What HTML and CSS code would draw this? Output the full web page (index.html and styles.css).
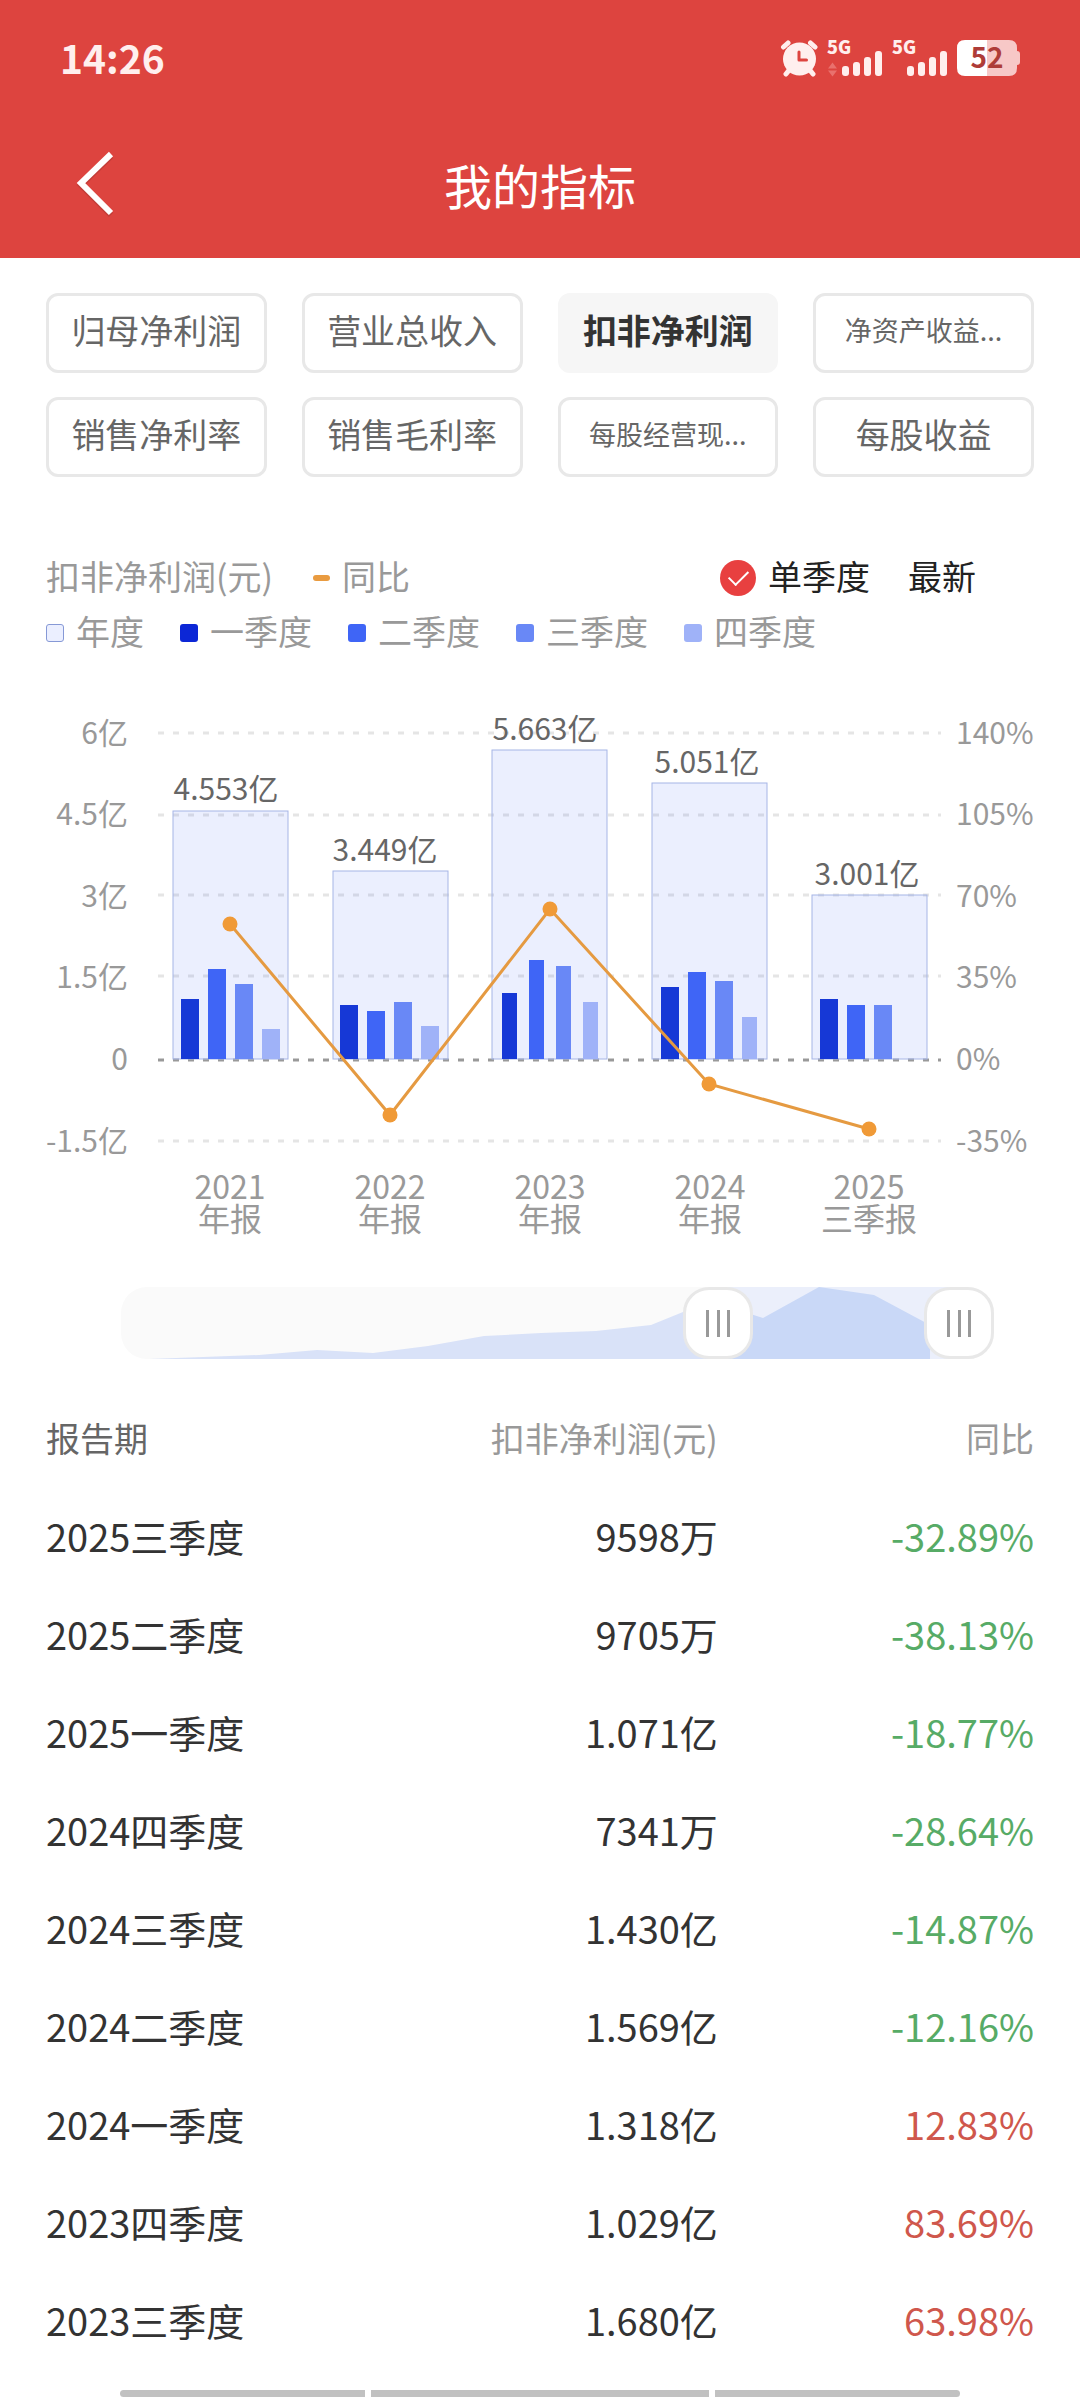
FILE: index.html
```html
<!DOCTYPE html>
<html lang="zh-CN">
<head>
<meta charset="utf-8">
<meta name="viewport" content="width=device-width, initial-scale=1">
<title>我的指标</title>
<link rel="stylesheet" href="styles.css">
</head>
<body>
<header class="header">
  <div class="status">
    <span class="status-time">14:26</span>
    <svg class="status-icons" viewBox="780 29 242 56" width="242" height="56" aria-hidden="true">
      <g stroke="#ffefee" stroke-width="5" stroke-linecap="round">
        <path d="M783.500 47L788 43M815 47L810.500 43M786 74L790 69M813 74L809 69"/>
      </g>
      <circle cx="799.500" cy="59" r="16.500" fill="#ffefee"/>
      <path d="M799 52V60H806.500" fill="none" stroke="#dd443f" stroke-width="3" stroke-linecap="round" stroke-linejoin="round"/>
      <g fill="#ffefee">
        <text class="net" x="827" y="54">5G</text>
        <rect x="842" y="66" width="7" height="10" rx="3"/>
        <rect x="853" y="62" width="7" height="14" rx="3"/>
        <rect x="864" y="57" width="7" height="19" rx="3"/>
        <rect x="875" y="51" width="7" height="25" rx="3"/>
        <text class="net" x="892" y="54">5G</text>
        <rect x="907" y="66" width="7" height="10" rx="3"/>
        <rect x="918" y="62" width="7" height="14" rx="3"/>
        <rect x="929" y="57" width="7" height="19" rx="3"/>
        <rect x="940" y="51" width="7" height="25" rx="3"/>
      </g>
      <path d="M828 68.500L832.500 62.500L837 68.500ZM828 70.500H837L832.500 76.500Z" fill="#e9716d"/>
      <path d="M987 40H1009Q1017 40 1017 48V51Q1020 51 1020 54V62Q1020 65 1017 65V68Q1017 76 1009 76H987Z" fill="#f7c8c7"/>
      <path d="M987 40H965Q957 40 957 48V68Q957 76 965 76H987Z" fill="#fff"/>
      <text class="battery" x="987" y="68" text-anchor="middle">52</text>
    </svg>
  </div>
  <nav class="nav">
    <button class="back" type="button" aria-label="返回">
      <svg viewBox="0 0 40 68" width="40" height="68" aria-hidden="true">
        <path d="M35 6L5 35L35 65" fill="none" stroke="#a93632" stroke-opacity=".5" stroke-width="6"/>
        <path d="M35 4L5 33L35 63" fill="none" stroke="#fff" stroke-width="6"/>
      </svg>
    </button>
    <h1 class="title">我的指标</h1>
  </nav>
</header>

<main class="main">
  <div class="tabs">
    <button class="tab" type="button">归母净利润</button>
    <button class="tab" type="button">营业总收入</button>
    <button class="tab tab-active" type="button" aria-pressed="true">扣非净利润</button>
    <button class="tab tab-long" type="button">净资产收益...</button>
    <button class="tab" type="button">销售净利率</button>
    <button class="tab" type="button">销售毛利率</button>
    <button class="tab tab-long" type="button">每股经营现...</button>
    <button class="tab" type="button">每股收益</button>
  </div>

  <div class="legend">
    <div class="legend-row legend-top">
      <span class="legend-item"><span class="label">扣非净利润(元)</span></span>
      <span class="legend-item"><i class="dash"></i><span class="label">同比</span></span>
      <div class="controls">
        <label class="legend-item"><input class="check" type="checkbox" checked><span class="label">单季度</span></label>
        <button class="latest" type="button"><span class="label">最新</span></button>
      </div>
    </div>
    <div class="legend-row">
      <span class="legend-item"><i class="swatch year"></i><span class="label">年度</span></span>
      <span class="legend-item"><i class="swatch q1"></i><span class="label">一季度</span></span>
      <span class="legend-item"><i class="swatch q2"></i><span class="label">二季度</span></span>
      <span class="legend-item"><i class="swatch q3"></i><span class="label">三季度</span></span>
      <span class="legend-item"><i class="swatch q4"></i><span class="label">四季度</span></span>
    </div>
  </div>

  <svg class="chart" viewBox="46 700 988 540" role="img" aria-label="扣非净利润与同比">
    <g class="grid">
      <path d="M158 733H941M158 815H941M158 895H941M158 976H941M158 1141H941"/>
      <path class="zero" d="M158 1060H941"/>
    </g>
    <g class="year-bars">
      <rect x="173" y="811" width="115" height="248"/>
      <rect x="333" y="871" width="115" height="188"/>
      <rect x="492" y="750" width="115" height="309"/>
      <rect x="652" y="783" width="115" height="276"/>
      <rect x="812" y="895" width="115" height="164"/>
    </g>
    <g fill="#1638d6">
      <rect x="181" y="999" width="18" height="60"/>
      <rect x="340" y="1005" width="18" height="54"/>
      <rect x="502" y="993" width="15" height="66"/>
      <rect x="661" y="987" width="18" height="72"/>
      <rect x="820" y="999" width="18" height="60"/>
    </g>
    <g fill="#3f65f6">
      <rect x="208" y="969" width="18" height="90"/>
      <rect x="367" y="1011" width="18" height="48"/>
      <rect x="529" y="960" width="15" height="99"/>
      <rect x="688" y="972" width="18" height="87"/>
      <rect x="847" y="1005" width="18" height="54"/>
    </g>
    <g fill="#6988f6">
      <rect x="235" y="984" width="18" height="75"/>
      <rect x="394" y="1002" width="18" height="57"/>
      <rect x="556" y="966" width="15" height="93"/>
      <rect x="715" y="981" width="18" height="78"/>
      <rect x="874" y="1005" width="18" height="54"/>
    </g>
    <g fill="#9fb2f8">
      <rect x="262" y="1029" width="18" height="30"/>
      <rect x="421" y="1026" width="18" height="33"/>
      <rect x="583" y="1002" width="15" height="57"/>
      <rect x="742" y="1017" width="15" height="42"/>
    </g>
    <polyline points="230,924 390,1115 550,909 709,1084 869,1129" fill="none" stroke="#e59a41" stroke-width="3"/>
    <g fill="#f09a37">
      <circle cx="230" cy="924" r="7.500"/>
      <circle cx="390" cy="1115" r="7.500"/>
      <circle cx="550" cy="909" r="7.500"/>
      <circle cx="709" cy="1084" r="7.500"/>
      <circle cx="869" cy="1129" r="7.500"/>
    </g>
    <g class="values">
      <text x="226" y="800">4.553亿</text>
      <text x="385" y="861">3.449亿</text>
      <text x="545" y="740">5.663亿</text>
      <text x="707" y="773">5.051亿</text>
      <text x="867" y="885">3.001亿</text>
    </g>
    <g class="axis axis-left">
      <text x="128" y="744">6亿</text>
      <text x="128" y="825">4.5亿</text>
      <text x="128" y="907">3亿</text>
      <text x="128" y="988">1.5亿</text>
      <text x="128" y="1070">0</text>
      <text x="128" y="1152">-1.5亿</text>
    </g>
    <g class="axis">
      <text x="956" y="744">140%</text>
      <text x="956" y="825">105%</text>
      <text x="956" y="907">70%</text>
      <text x="956" y="988">35%</text>
      <text x="956" y="1070">0%</text>
      <text x="956" y="1152">-35%</text>
    </g>
    <g class="periods">
      <text y="1199"><tspan x="230">2021</tspan><tspan x="230" dy="32">年报</tspan></text>
      <text y="1199"><tspan x="390">2022</tspan><tspan x="390" dy="32">年报</tspan></text>
      <text y="1199"><tspan x="550">2023</tspan><tspan x="550" dy="32">年报</tspan></text>
      <text y="1199"><tspan x="710">2024</tspan><tspan x="710" dy="32">年报</tspan></text>
      <text y="1199"><tspan x="869">2025</tspan><tspan x="869" dy="32">三季报</tspan></text>
    </g>
  </svg>

  <div class="range">
    <svg class="range-track" viewBox="0 0 873 72" preserveAspectRatio="none" aria-hidden="true">
      <rect width="873" height="72" fill="#fafafa"/>
      <rect x="598" width="239" height="72" fill="#ebeffb"/>
      <path d="M0 72L28 72L82 70L138 68L196 63L252 66L307 59L363 49L420 46L475 44L530 38L562 25L587 14L598 17V72Z" fill="#d9e2f8"/>
      <path d="M598 17L642 31L698 0L753 8L809 38V72H598Z" fill="#c9d8f7"/>
    </svg>
    <input class="handle" type="range" min="0" max="100" value="70" aria-label="起始报告期">
    <input class="handle" type="range" min="0" max="100" value="100" aria-label="结束报告期">
  </div>

  <table class="report">
    <thead>
      <tr><th class="period">报告期</th><th class="amount">扣非净利润(元)</th><th class="rate">同比</th></tr>
    </thead>
    <tbody>
      <tr><td>2025三季度</td><td>9598万</td><td class="down">-32.89%</td></tr>
      <tr><td>2025二季度</td><td>9705万</td><td class="down">-38.13%</td></tr>
      <tr><td>2025一季度</td><td>1.071亿</td><td class="down">-18.77%</td></tr>
      <tr><td>2024四季度</td><td>7341万</td><td class="down">-28.64%</td></tr>
      <tr><td>2024三季度</td><td>1.430亿</td><td class="down">-14.87%</td></tr>
      <tr><td>2024二季度</td><td>1.569亿</td><td class="down">-12.16%</td></tr>
      <tr><td>2024一季度</td><td>1.318亿</td><td class="up">12.83%</td></tr>
      <tr><td>2023四季度</td><td>1.029亿</td><td class="up">83.69%</td></tr>
      <tr><td>2023三季度</td><td>1.680亿</td><td class="up">63.98%</td></tr>
    </tbody>
  </table>
</main>

<footer class="gesture" aria-hidden="true"><i></i><i class="wide"></i><i></i></footer>
</body>
</html>
```
FILE: styles.css
```css
* { box-sizing: border-box; }

body {
  margin: 0;
  background: #fff;
  color: #333;
  font-family: "Noto Sans CJK SC", "Noto Sans", sans-serif;
}

button {
  padding: 0;
  border: 0;
  background: none;
  color: inherit;
  font: inherit;
}

/* Header */
.header {
  padding-bottom: 4px;
  background: #dd443f;
  color: #fff;
}

.status {
  display: flex;
  align-items: center;
  justify-content: space-between;
  height: 114px;
  padding: 0 58px 0 60px;
}

.status-time {
  color: #ffefee;
  font-size: 39px;
  font-weight: 700;
  line-height: 48px;
}

.net { font-size: 18px; font-weight: 900; }
.battery { font-size: 28px; font-weight: 700; fill: #ae3c38; }

.nav {
  display: grid;
  grid-template-columns: 1fr auto 1fr;
  align-items: center;
  height: 140px;
  padding: 0 76px;
}

.back { justify-self: start; height: 68px; }
.back svg { display: block; }

.title {
  margin: 0;
  font-size: 48px;
  font-weight: 400;
  line-height: 72px;
}

/* Indicator tabs */
.main { padding: 35px 46px 0; }

.tabs {
  display: grid;
  grid-template-columns: repeat(4, 1fr);
  gap: 24px 35px;
}

.tab {
  height: 80px;
  padding-bottom: 8px;
  border: 3px solid #e8e8e8;
  border-radius: 12px;
  color: #666;
  font-size: 34px;
  white-space: nowrap;
}

.tab-long { font-size: 27px; }

.tab-active {
  border-color: #f6f6f6;
  background: #f6f6f6;
  color: #333;
  font-weight: 700;
}

/* Legend */
.legend {
  margin-top: 73px;
  color: #999;
  font-size: 34px;
}

.legend-row {
  display: flex;
  flex-wrap: wrap;
  align-items: center;
  gap: 0 36px;
}

.legend-top { gap: 0 40px; }

.legend-item {
  display: flex;
  align-items: center;
  gap: 12px;
}

.label {
  line-height: 51px;
  padding-bottom: 4px;
}

.controls {
  display: flex;
  align-items: center;
  gap: 38px;
  margin: 0 58px 0 auto;
  color: #222;
}

.latest { display: flex; }

.dash {
  width: 17px;
  height: 6px;
  border-radius: 3px;
  background: #e99b40;
}

.swatch {
  width: 18px;
  height: 18px;
  border-radius: 3px;
}

.year { border: 1px solid #8699d6; background: #ebefff; }
.q1 { background: #0c27d6; }
.q2 { background: #3f65f6; }
.q3 { background: #6988f6; }
.q4 { background: #9fb2f8; }

.check {
  display: grid;
  place-items: center;
  width: 36px;
  height: 36px;
  margin: 0;
  border-radius: 50%;
  background: #e84040;
  appearance: none;
}

.check::before {
  content: "";
  width: 17px;
  height: 9px;
  margin-bottom: 5px;
  border: solid #fff;
  border-width: 0 0 2px 2px;
  transform: rotate(-45deg);
}

/* Chart */
.chart {
  display: block;
  width: 100%;
  margin-top: 40px;
}

.grid path {
  stroke: #e5e5e5;
  stroke-width: 3;
  stroke-dasharray: 6 9;
}

.grid .zero { stroke: #999; }

.year-bars rect {
  fill: #3f65f6;
  fill-opacity: .1;
  stroke: #a6b5e6;
  stroke-width: 1;
}

.axis { fill: #999; font-size: 30px; }
.axis-left { text-anchor: end; }
.values { fill: #666; font-size: 30px; text-anchor: middle; }
.periods { fill: #999; font-size: 32px; text-anchor: middle; }

/* Range selector */
.range {
  position: relative;
  height: 72px;
  margin: 47px 40px 0 75px;
}

.range-track {
  display: block;
  width: 100%;
  height: 72px;
  border-radius: 26px;
}

.handle {
  position: absolute;
  inset: 0;
  width: 100%;
  height: 72px;
  margin: 0;
  background: none;
  appearance: none;
  pointer-events: none;
}

.handle::-webkit-slider-thumb {
  width: 70px;
  height: 72px;
  border: 3px solid #e8e8e8;
  border-radius: 26px;
  background:
    linear-gradient(#999, #999) 20px center / 3px 27px no-repeat,
    linear-gradient(#999, #999) center / 3px 27px no-repeat,
    linear-gradient(#999, #999) 41px center / 3px 27px no-repeat,
    #fff;
  appearance: none;
  pointer-events: auto;
}

/* Report table */
.report {
  width: 100%;
  margin-top: 30px;
  border-collapse: collapse;
  table-layout: fixed;
  font-size: 38px;
}

.report th,
.report td {
  height: 98px;
  padding: 0;
  text-align: right;
  line-height: 56px;
}

.report th {
  color: #999;
  font-size: 34px;
  font-weight: 400;
}

.report th:first-child,
.report td:first-child { text-align: left; }

.report .period { width: 30%; color: #666; }
.report .amount { width: 38%; }
.report .down { color: #57ab66; }
.report .up { color: #cf574c; }

/* Gesture bar */
.gesture {
  display: flex;
  gap: 6px;
  margin-top: 21px;
  padding: 0 120px 3px;
}

.gesture i {
  flex: 245;
  height: 7px;
  background: #c1c1c1;
}

.gesture .wide { flex: 338; }
.gesture i:first-child { border-radius: 4px 0 0 4px; }
.gesture i:last-child { border-radius: 0 4px 4px 0; }
```
